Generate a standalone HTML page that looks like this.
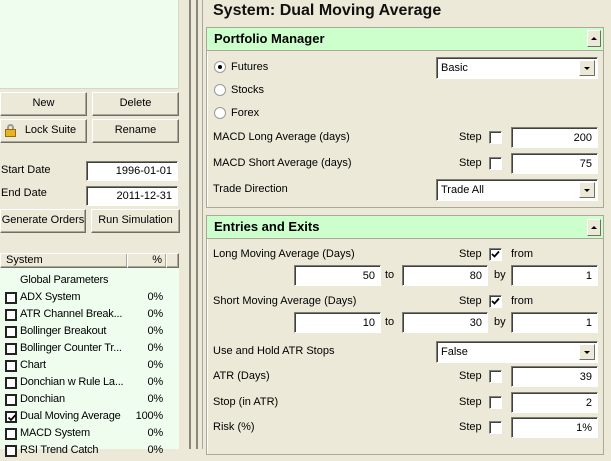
<!DOCTYPE html>
<html><head><style>
*{box-sizing:border-box;margin:0;padding:0}
body{width:611px;height:449px;overflow:hidden;background:#ece9d8;font-family:"Liberation Sans",sans-serif;font-size:11px;color:#000;position:relative}
.a{position:absolute}
.btn{position:absolute;background:#ece9d8;border:1px solid;border-color:#fff #716f64 #716f64 #fff;box-shadow:inset -1px -1px 0 #aca899;text-align:center;font-size:11px;line-height:21px}
.inp{position:absolute;background:#fff;border:1px solid;border-color:#7f7d70 #fff #fff #7f7d70;box-shadow:inset 1px 1px 0 #404040;text-align:right;padding-right:5px;line-height:20px;font-size:11px}
.sel{position:absolute;background:#fff;border:1px solid;border-color:#7f7d70 #fff #fff #7f7d70;box-shadow:inset 1px 1px 0 #404040;padding-left:4px;line-height:20px;font-size:11px}
.sel .dd{position:absolute;right:2px;top:2px;width:16px;height:16px;background:#ece9d8;border:1px solid;border-color:#fff #716f64 #716f64 #fff}
.dd:after{content:"";position:absolute;left:4px;top:6px;border-left:3px solid transparent;border-right:3px solid transparent;border-top:3px solid #000}
.up{position:absolute;width:14px;height:17px;background:#ece9d8;border:1px solid;border-color:#fff #716f64 #716f64 #fff}
.up:after{content:"";position:absolute;left:3px;top:6px;border-left:3px solid transparent;border-right:3px solid transparent;border-bottom:3px solid #000}
.cb{position:absolute;width:13px;height:13px;background:#fff;border:1px solid;border-color:#808080 #fff #fff #808080;box-shadow:inset 1px 1px 0 #404040}
.lcb{position:absolute;left:5px;top:1px;width:12px;height:12px;border:2px solid #222;background:#fff}
.panel{position:absolute;left:206px;width:398px;border:1px solid #aca899;box-shadow:inset 1px 1px 0 #fff}
.hdr{position:absolute;left:206px;width:398px;height:24px;background:#ccffcc;border:1px solid #aca899;font-weight:bold;font-size:13px;line-height:22px;padding-left:7px}
.t{position:absolute;font-size:11px;white-space:nowrap}
.rad{position:absolute;width:12px;height:12px;border-radius:50%;background:#fff;border:1px solid #9a9a9a}
.row{position:absolute;left:0;width:166px;height:17px;font-size:11px;white-space:nowrap;letter-spacing:-0.2px}
.row .n{position:absolute;left:20px;top:0}
.pc{position:absolute;right:3px;top:0}
svg.ck{position:absolute;left:1px;top:1px}
</style></head><body>
<div class="a" style="left:0;top:0;width:179px;height:89px;background:#effdef;border-right:1px solid #d8d6c8;border-bottom:1px solid #d8d6c8"></div>
<div class="btn" style="left:0;top:92px;width:87px;height:24px">New</div>
<div class="btn" style="left:92px;top:92px;width:87px;height:24px">Delete</div>
<div class="btn" style="left:0;top:119px;width:87px;height:24px;padding-left:14px">Lock Suite</div>
<div class="a" style="left:5px;top:124px;width:11px;height:12px">
<div class="a" style="left:2px;top:0;width:7px;height:7px;border:2px solid #999;border-bottom:none;border-radius:4px 4px 0 0"></div>
<div class="a" style="left:0;top:5px;width:11px;height:8px;background:#e6b422;border:1px solid #9a6a10"></div></div>
<div class="btn" style="left:92px;top:119px;width:87px;height:24px">Rename</div>
<div class="t" style="left:1px;top:164px">Start Date</div>
<div class="inp" style="left:86px;top:161px;width:92px;height:20px;line-height:18px">1996-01-01</div>
<div class="t" style="left:1px;top:187px">End Date</div>
<div class="inp" style="left:86px;top:186px;width:92px;height:20px;line-height:18px">2011-12-31</div>
<div class="btn" style="left:0;top:209px;width:86px;height:24px">Generate Orders</div>
<div class="btn" style="left:91px;top:209px;width:89px;height:24px">Run Simulation</div>
<div class="a" style="left:0;top:253px;width:179px;height:196px;background:#effdef"></div>
<div class="btn" style="left:0;top:253px;width:128px;height:15px;line-height:13px;text-align:left;padding-left:5px">System</div>
<div class="btn" style="left:127px;top:253px;width:40px;height:15px;line-height:13px;text-align:right;padding-right:4px">%</div>
<div class="btn" style="left:166px;top:253px;width:13px;height:15px"></div>
<div class="row" style="top:274px"><span class="n">Global Parameters</span></div>
<div class="row" style="top:291px"><span class="lcb"></span><span class="n">ADX System</span><span class="pc">0%</span></div>
<div class="row" style="top:308px"><span class="lcb"></span><span class="n">ATR Channel Break...</span><span class="pc">0%</span></div>
<div class="row" style="top:325px"><span class="lcb"></span><span class="n">Bollinger Breakout</span><span class="pc">0%</span></div>
<div class="row" style="top:342px"><span class="lcb"></span><span class="n">Bollinger Counter Tr...</span><span class="pc">0%</span></div>
<div class="row" style="top:359px"><span class="lcb"></span><span class="n">Chart</span><span class="pc">0%</span></div>
<div class="row" style="top:376px"><span class="lcb"></span><span class="n">Donchian w Rule La...</span><span class="pc">0%</span></div>
<div class="row" style="top:393px"><span class="lcb"></span><span class="n">Donchian</span><span class="pc">0%</span></div>
<div class="row" style="top:410px"><span class="lcb"><svg class="ck" width="8" height="8" viewBox="0 0 8 8"><path d="M0.5 3.5 L3 6 L7.5 1" stroke="#000" stroke-width="1.8" fill="none"/></svg></span><span class="n">Dual Moving Average</span><span class="pc">100%</span></div>
<div class="row" style="top:427px"><span class="lcb"></span><span class="n">MACD System</span><span class="pc">0%</span></div>
<div class="row" style="top:444px"><span class="lcb"></span><span class="n">RSI Trend Catch</span><span class="pc">0%</span></div>
<div class="a" style="left:189px;top:0;width:2px;height:449px;background:#8a887c"></div>
<div class="a" style="left:196px;top:0;width:2px;height:449px;background:#8a887c"></div>
<div class="a" style="left:202px;top:0;width:1px;height:449px;background:#aca899"></div>
<div class="a" style="left:213px;top:2px;font-size:16px;font-weight:bold;color:#111">System: Dual Moving Average</div>
<div class="panel" style="top:27px;height:181px"></div>
<div class="hdr" style="top:27px">Portfolio Manager</div>
<div class="up" style="left:587px;top:30px"></div>
<div class="rad" style="left:214px;top:61px"><div class="a" style="left:3px;top:3px;width:4px;height:4px;background:#000;border-radius:50%"></div></div>
<div class="t" style="left:231px;top:61px">Futures</div>
<div class="rad" style="left:214px;top:84px"></div><div class="t" style="left:231px;top:84px">Stocks</div>
<div class="rad" style="left:214px;top:107px"></div><div class="t" style="left:231px;top:107px">Forex</div>
<div class="sel" style="left:436px;top:57px;width:162px;height:22px">Basic<div class="dd"></div></div>
<div class="t" style="left:213px;top:131px">MACD Long Average (days)</div>
<div class="t" style="left:459px;top:131px">Step</div><div class="cb" style="left:489px;top:131px"></div>
<div class="inp" style="left:511px;top:127px;width:87px;height:21px">200</div>
<div class="t" style="left:213px;top:157px">MACD Short Average (days)</div>
<div class="t" style="left:459px;top:157px">Step</div><div class="cb" style="left:489px;top:157px"></div>
<div class="inp" style="left:511px;top:153px;width:87px;height:21px">75</div>
<div class="t" style="left:213px;top:183px">Trade Direction</div>
<div class="sel" style="left:436px;top:179px;width:162px;height:22px">Trade All<div class="dd"></div></div>
<div class="panel" style="top:215px;height:240px"></div>
<div class="hdr" style="top:215px">Entries and Exits</div>
<div class="up" style="left:587px;top:219px"></div>
<div class="t" style="left:213px;top:248px">Long Moving Average (Days)</div>
<div class="t" style="left:459px;top:248px">Step</div><div class="cb" style="left:489px;top:248px"><svg class="ck" width="9" height="9" viewBox="0 0 9 9"><path d="M1 4 L3.5 6.5 L8 1.5" stroke="#000" stroke-width="1.8" fill="none"/></svg></div>
<div class="t" style="left:511px;top:248px">from</div>
<div class="inp" style="left:294px;top:265px;width:87px;height:21px">50</div><div class="t" style="left:385px;top:269px">to</div>
<div class="inp" style="left:402px;top:265px;width:86px;height:21px">80</div><div class="t" style="left:494px;top:269px">by</div>
<div class="inp" style="left:511px;top:265px;width:87px;height:21px">1</div>
<div class="t" style="left:213px;top:295px">Short Moving Average (Days)</div>
<div class="t" style="left:459px;top:295px">Step</div><div class="cb" style="left:489px;top:295px"><svg class="ck" width="9" height="9" viewBox="0 0 9 9"><path d="M1 4 L3.5 6.5 L8 1.5" stroke="#000" stroke-width="1.8" fill="none"/></svg></div>
<div class="t" style="left:511px;top:295px">from</div>
<div class="inp" style="left:294px;top:312px;width:87px;height:21px">10</div><div class="t" style="left:385px;top:316px">to</div>
<div class="inp" style="left:402px;top:312px;width:86px;height:21px">30</div><div class="t" style="left:494px;top:316px">by</div>
<div class="inp" style="left:511px;top:312px;width:87px;height:21px">1</div>
<div class="t" style="left:213px;top:345px">Use and Hold ATR Stops</div>
<div class="sel" style="left:436px;top:341px;width:162px;height:22px">False<div class="dd"></div></div>
<div class="t" style="left:213px;top:370px">ATR (Days)</div>
<div class="t" style="left:459px;top:370px">Step</div><div class="cb" style="left:489px;top:370px"></div>
<div class="inp" style="left:511px;top:366px;width:87px;height:21px">39</div>
<div class="t" style="left:213px;top:396px">Stop (in ATR)</div>
<div class="t" style="left:459px;top:396px">Step</div><div class="cb" style="left:489px;top:396px"></div>
<div class="inp" style="left:511px;top:392px;width:87px;height:21px">2</div>
<div class="t" style="left:213px;top:421px">Risk (%)</div>
<div class="t" style="left:459px;top:421px">Step</div><div class="cb" style="left:489px;top:421px"></div>
<div class="inp" style="left:511px;top:417px;width:87px;height:21px">1%</div>
</body></html>
